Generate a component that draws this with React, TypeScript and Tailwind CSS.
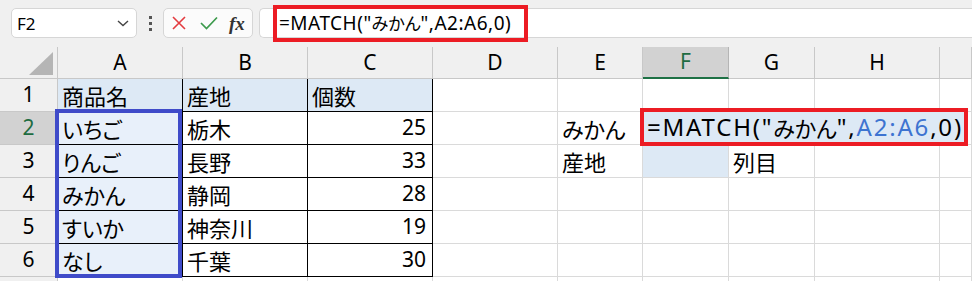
import React from "react";

const FONT = '"Noto Sans", "Noto Sans CJK JP", sans-serif';
const CJK = '"Noto Sans CJK JP", sans-serif';

const cols = ["A", "B", "C", "D", "E", "F", "G", "H", ""];

type Cell = { t?: string; right?: boolean; bg?: string; table?: boolean };

const rows: Cell[][] = [
  [
    { t: "商品名", bg: "bg-[#dde9f5]", table: true },
    { t: "産地", bg: "bg-[#dde9f5]", table: true },
    { t: "個数", bg: "bg-[#dde9f5]", table: true },
    {}, {}, {}, {}, {}, {},
  ],
  [
    { t: "いちご", bg: "bg-[#e8f0fa]", table: true },
    { t: "栃木", table: true },
    { t: "25", right: true, table: true },
    {}, { t: "みかん" }, { bg: "bg-[#dde9f5]" }, {}, {}, {},
  ],
  [
    { t: "りんご", bg: "bg-[#e8f0fa]", table: true },
    { t: "長野", table: true },
    { t: "33", right: true, table: true },
    {}, { t: "産地" }, { bg: "bg-[#dde9f5]" }, { t: "列目" }, {}, {},
  ],
  [
    { t: "みかん", bg: "bg-[#e8f0fa]", table: true },
    { t: "静岡", table: true },
    { t: "28", right: true, table: true },
    {}, {}, {}, {}, {}, {},
  ],
  [
    { t: "すいか", bg: "bg-[#e8f0fa]", table: true },
    { t: "神奈川", table: true },
    { t: "19", right: true, table: true },
    {}, {}, {}, {}, {}, {},
  ],
  [
    { t: "なし", bg: "bg-[#e8f0fa]", table: true },
    { t: "千葉", table: true },
    { t: "30", right: true, table: true },
    {}, {}, {}, {}, {}, {},
  ],
];

const palt = { fontFeatureSettings: '"palt"' } as React.CSSProperties;

function Toolbar() {
  return (
    <div className="h-[47px] flex items-start pt-[8px] bg-[#f0f0f0]">
      <div className="ml-[11px] w-[126px] h-[30px] bg-white border border-[#d6d6d6] rounded-[5px] flex items-center justify-between pl-[5px] pr-[6px]">
        <span className="text-[17px] text-black leading-none" style={{ fontFamily: FONT }}>F2</span>
        <svg width="14" height="10" viewBox="0 0 14 10">
          <path d="M2 3 L7 7.5 L12 3" stroke="#444" strokeWidth="1.4" fill="none" />
        </svg>
      </div>
      <div className="w-[26px] h-[30px] flex flex-col items-center justify-center gap-[3px]">
        <div className="w-[3px] h-[3px] bg-[#555]" />
        <div className="w-[3px] h-[3px] bg-[#555]" />
        <div className="w-[3px] h-[3px] bg-[#555]" />
      </div>
      <div className="w-[90px] h-[30px] bg-[#fbfbfb] border border-[#d6d6d6] rounded-[5px] flex items-center pl-[7px] gap-[12px]">
        <svg width="16" height="16" viewBox="0 0 16 16">
          <path d="M2 2 L14 14 M14 2 L2 14" stroke="#e33b3f" strokeWidth="1.6" fill="none" />
        </svg>
        <svg width="20" height="16" viewBox="0 0 20 16">
          <path d="M2 8 L7.5 13.5 L18 2.5" stroke="#3c9a4c" strokeWidth="1.7" fill="none" />
        </svg>
        <span className="text-[19px] italic font-bold text-[#333] leading-none -ml-[2px]" style={{ fontFamily: '"Liberation Serif", serif' }}>
          fx
        </span>
      </div>
      <div className="ml-[6px] flex-1 h-[30px] bg-white border border-[#d6d6d6] border-r-0 rounded-l-[5px] relative">
        <div className="absolute left-[13px] top-[-4px] w-[255px] h-[37px] border-[4px] border-[#ec1c24]" />
        <div className="absolute left-[19px] top-0 h-full flex items-center text-[19px] tracking-[0.5px] text-black whitespace-nowrap" style={{ fontFamily: FONT }}>
          =MATCH("<span className="text-[17px] tracking-normal" style={{ fontFamily: CJK, ...palt }}>みかん</span>",A2:A6,0)
        </div>
      </div>
    </div>
  );
}

export default function App() {
  return (
    <div className="w-[972px] h-[281px] overflow-hidden bg-white" style={{ fontFamily: FONT }}>
      <Toolbar />
      <div className="relative grid grid-cols-[58px_125px_125px_125px_125px_85px_86px_86px_125px_1fr] grid-rows-[32px_repeat(6,33px)_1fr] h-[234px]">
        <div className="bg-[#f0f0f0] border-r border-b border-[#c8c8c8] relative">
          <svg className="absolute left-[29px] top-[5px]" width="24" height="23" viewBox="0 0 24 23">
            <polygon points="24,0 24,23 0,23" fill="#b5b5b5" />
          </svg>
        </div>
        {cols.map((c, i) => (
          <div
            key={"h" + i}
            className={
              "flex items-center justify-center text-[21px] border-r border-b " +
              (c === "F"
                ? "bg-[#d2d2d2] text-[#1e6c41] border-b-[#1e7145] border-b-2 border-r-[#b5b5b5]"
                : "bg-[#f0f0f0] text-black border-[#c8c8c8]")
            }
          >
            {c}
          </div>
        ))}
        {rows.map((r, ri) => (
          <React.Fragment key={"r" + ri}>
            <div
              className={
                "flex items-center justify-center text-[21px] border-r border-b border-[#c8c8c8] " +
                (ri === 1 ? "bg-[#d2d2d2] text-[#1e6c41]" : "bg-[#f0f0f0] text-black")
              }
            >
              {ri + 1}
            </div>
            {r.map((cell, ci) => {
              const isNum = /^[0-9]+$/.test(cell.t ?? "");
              return (
                <div
                  key={ci}
                  className={
                    "flex items-center text-black whitespace-nowrap px-[4px] " +
                    (isNum ? "text-[21px] " : "text-[22px] ") +
                    (cell.right ? "justify-end pr-[6px] " : "justify-start ") +
                    (cell.bg ?? "bg-white") +
                    " " +
                    (cell.table
                      ? "border-r border-b border-black"
                      : "border-r border-b border-[#dadada]")
                  }
                  style={{ fontFamily: isNum ? FONT : CJK, ...(isNum ? {} : palt) }}
                >
                  {cell.t}
                </div>
              );
            })}
          </React.Fragment>
        ))}
        <div className="bg-[#f0f0f0] border-r border-[#c8c8c8]" />
        {cols.map((_, i) => (
          <div key={"b" + i} className="border-r border-[#dadada]" />
        ))}

        {/* selection over A2:A6 */}
        <div className="absolute left-[55px] top-[62px] w-[127px] h-[169px] border-[4px] border-[#3f4bc9] pointer-events-none" />

        {/* in-cell editor F2 */}
        <div className="absolute left-[640px] top-[61px] w-[328px] h-[38px] border-[4px] border-[#ec1c24] bg-[#dde9f5] flex items-center pl-[3px] text-[24px] tracking-[1.8px] text-black whitespace-nowrap">
          =MATCH("<span className="text-[22px] tracking-normal" style={{ fontFamily: CJK, ...palt }}>みかん</span>",
          <span className="text-[#3d74d1]">A2:A6</span>,0)
        </div>
      </div>
    </div>
  );
}
